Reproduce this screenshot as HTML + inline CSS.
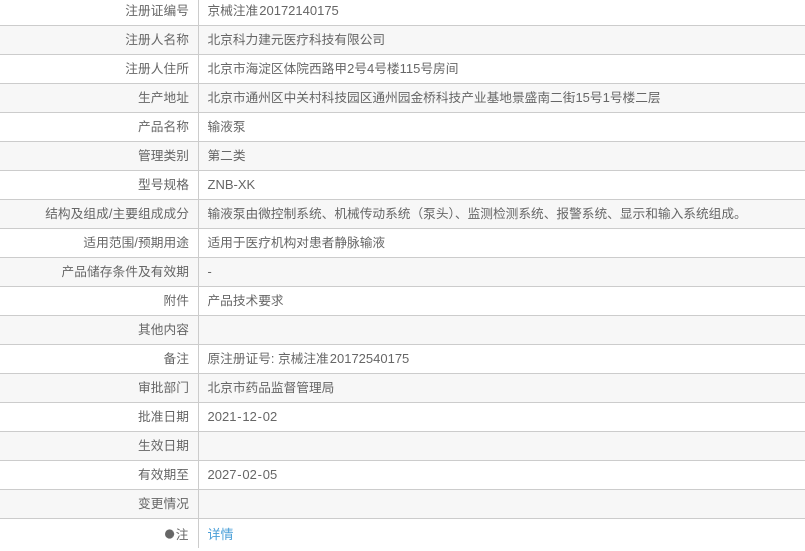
<!DOCTYPE html>
<html><head><meta charset="utf-8">
<style>
html,body{margin:0;padding:0;background:#fff;}
body{width:805px;height:546px;overflow:hidden;position:relative;font-family:"Liberation Sans","Noto Sans CJK SC",sans-serif;font-size:12.7px;color:#666;}
.r{position:absolute;left:0;width:805px;height:28px;border-bottom:1px solid #ccc;line-height:29px;white-space:nowrap;}
.o{background:#f7f7f7;}
.l{position:absolute;left:0;top:0;width:189px;text-align:right;letter-spacing:.06px;}
.v{position:absolute;left:198px;top:0;height:29px;border-left:1px solid #ccc;padding-left:8.5px;}
b{font-weight:normal;font-size:13px;line-height:1;}
b.n{margin-left:1px;}
i{font-style:normal;margin:0 .8px;}
a{color:#4a9fd8;text-decoration:none;font-size:13px;line-height:1;}
</style></head><body>
<div class="r" style="top:0;height:25px;line-height:23px"><span class="l">注册证编号</span><span class="v" style="height:26px">京械注准<b class="n">20172140175</b></span></div>
<div class="r o" style="top:26px"><span class="l">注册人名称</span><span class="v">北京科力建元医疗科技有限公司</span></div>
<div class="r" style="top:55px"><span class="l">注册人住所</span><span class="v">北京市海淀区体院西路甲<b>2</b>号<b>4</b>号楼<b>115</b>号房间</span></div>
<div class="r o" style="top:84px"><span class="l">生产地址</span><span class="v">北京市通州区中关村科技园区通州园金桥科技产业基地景盛南二街<b>15</b>号<b>1</b>号楼二层</span></div>
<div class="r" style="top:113px"><span class="l">产品名称</span><span class="v">输液泵</span></div>
<div class="r o" style="top:142px"><span class="l">管理类别</span><span class="v">第二类</span></div>
<div class="r" style="top:171px"><span class="l">型号规格</span><span class="v"><b>ZNB-XK</b></span></div>
<div class="r o" style="top:200px"><span class="l">结构及组成/主要组成成分</span><span class="v">输液泵由微控制系统、机械传动系统（泵头）、监测检测系统、报警系统、显示和输入系统组成。</span></div>
<div class="r" style="top:229px"><span class="l">适用范围/预期用途</span><span class="v">适用于医疗机构对患者静脉输液</span></div>
<div class="r o" style="top:258px"><span class="l">产品储存条件及有效期</span><span class="v">-</span></div>
<div class="r" style="top:287px"><span class="l">附件</span><span class="v">产品技术要求</span></div>
<div class="r o" style="top:316px"><span class="l">其他内容</span><span class="v"></span></div>
<div class="r" style="top:345px"><span class="l">备注</span><span class="v">原注册证号: 京械注准<b class="n">20172540175</b></span></div>
<div class="r o" style="top:374px"><span class="l">审批部门</span><span class="v">北京市药品监督管理局</span></div>
<div class="r" style="top:403px"><span class="l">批准日期</span><span class="v"><b>2021<i>-</i>12<i>-</i>02</b></span></div>
<div class="r o" style="top:432px"><span class="l">生效日期</span><span class="v"></span></div>
<div class="r" style="top:461px"><span class="l">有效期至</span><span class="v"><b>2027<i>-</i>02<i>-</i>05</b></span></div>
<div class="r o" style="top:490px"><span class="l">变更情况</span><span class="v"></span></div>
<div class="r" style="top:519px;height:27px;border:0;line-height:32px"><span class="l" style="width:188.5px">注</span><span class="v"><a>详情</a></span></div>
<svg style="position:absolute;left:164px;top:528px" width="12" height="13" viewBox="0 0 12 13"><circle cx="5.6" cy="6" r="4.6" fill="#666"/><path d="M7.6 1.9 A4.6 4.6 0 0 1 7.6 10.1 L10.5 6Z" fill="#999"/></svg>
</body></html>
